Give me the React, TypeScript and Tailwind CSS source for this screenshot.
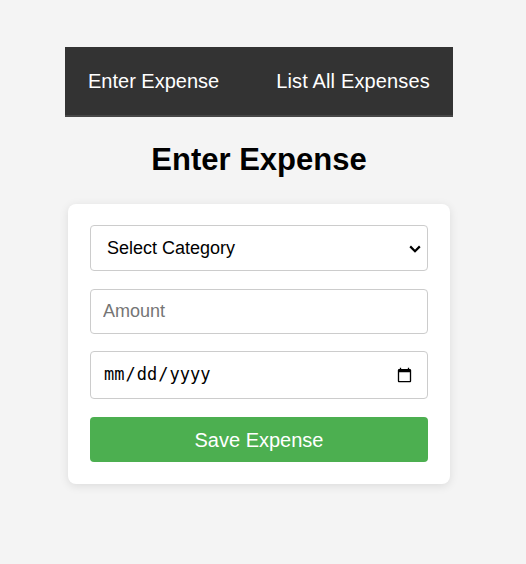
import React from "react";

export default function App() {
  return (
    <div className="min-h-[564px] bg-[#f4f4f4] pt-[47px] font-['Liberation_Sans',Arial,sans-serif]">
      <div className="ml-[65px] w-[388px]">
        <nav className="flex h-[70px] items-center gap-[57px] border-b-2 border-[#474747] bg-[#333333] pl-[23px] pb-[1px] text-[20px] text-white">
          <a href="#enter">Enter Expense</a>
          <a href="#list" className="tracking-[0.15px]">List All Expenses</a>
        </nav>
        <h2 className="mt-[25px] text-center text-[31px] leading-[36px] font-bold text-black">
          Enter Expense
        </h2>
      </div>
      <div className="ml-[68px] mt-[26px] w-[382px] rounded-lg bg-white p-[22px] pt-[21px] shadow-[0_2px_10px_rgba(0,0,0,0.1)]">
        <div className="relative">
          <select className="block h-[46px] w-full appearance-none rounded border border-[#cccccc] bg-white pl-[16px] pr-[36px] text-[18px] text-black">
            <option>Select Category</option>
            <option>Food</option>
            <option>Transport</option>
            <option>Entertainment</option>
          </select>
          <svg
            className="pointer-events-none absolute right-[7px] top-[20px]"
            width="12"
            height="8"
            viewBox="0 0 12 8"
            fill="none"
          >
            <path d="M1.2 1.4 6 6.2 10.8 1.4" stroke="#000" strokeWidth="2.2" />
          </svg>
        </div>
        <input
          type="number"
          placeholder="Amount"
          className="mt-[18px] block h-[45px] w-full rounded border border-[#cccccc] px-[12px] text-[18px] text-black placeholder:text-[#757575]"
        />
        <input
          type="date"
          className="mt-[17px] block h-[48px] w-full rounded border border-[#cccccc] px-[12px] font-['DejaVu_Sans_Mono',monospace] text-[17px] text-black"
        />
        <button className="mt-[18px] block h-[45px] w-full rounded bg-[#4caf50] text-[20px] text-white">
          Save Expense
        </button>
      </div>
    </div>
  );
}
